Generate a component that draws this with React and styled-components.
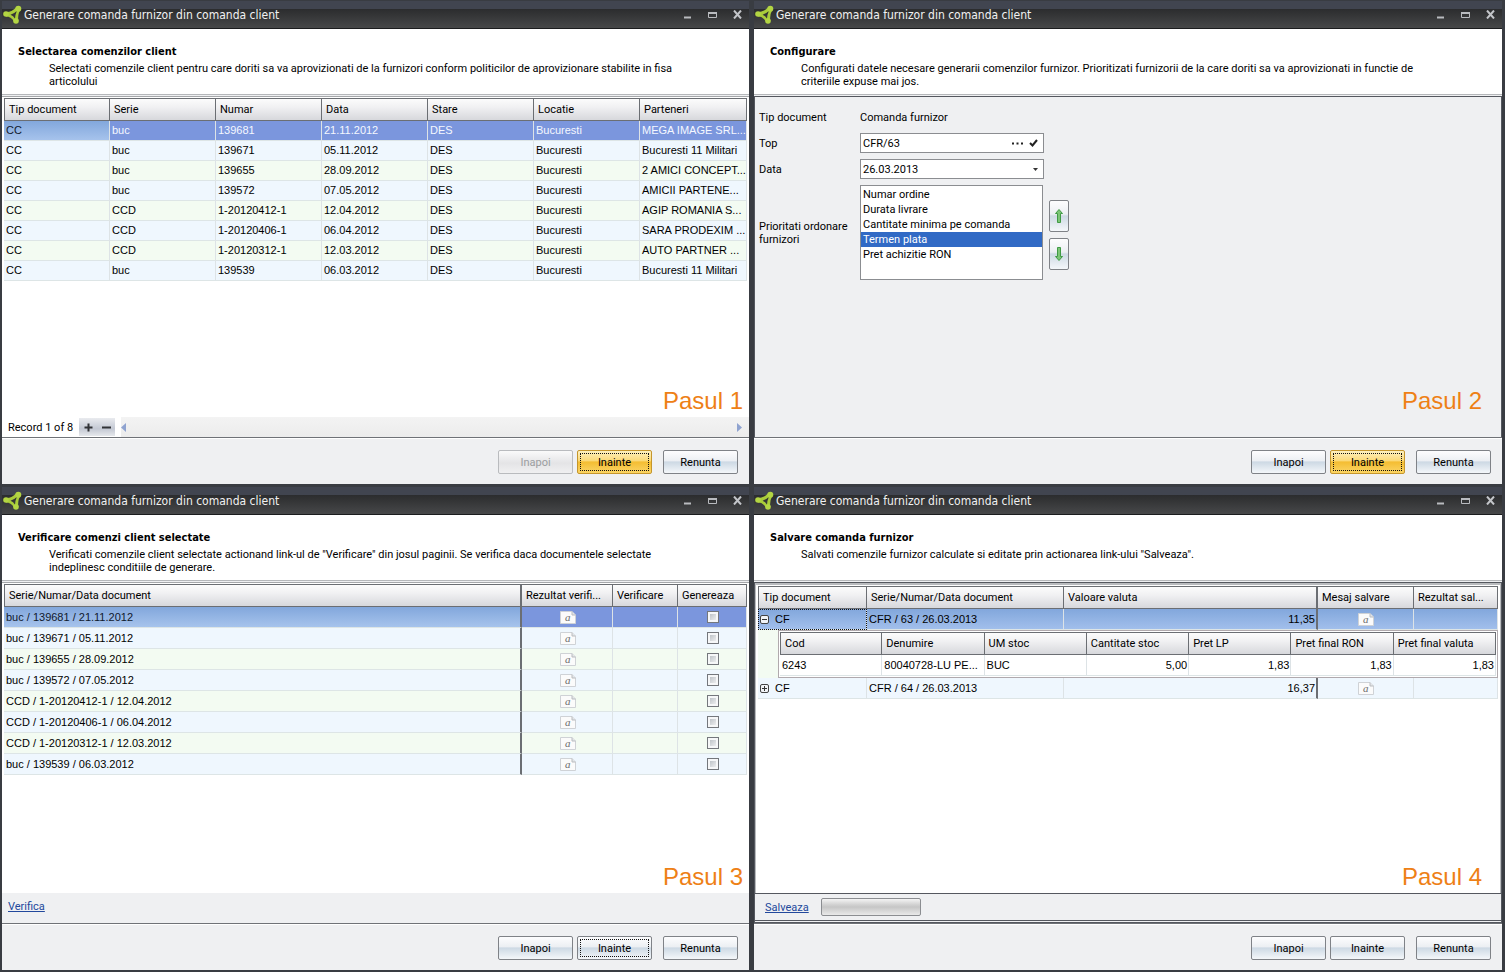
import styled, { createGlobalStyle, css } from "styled-components";

const orders = [
  ["CC", "buc", "139681", "21.11.2012", "DES", "Bucuresti", "MEGA IMAGE SRL..."],
  ["CC", "buc", "139671", "05.11.2012", "DES", "Bucuresti", "Bucuresti 11 Militari"],
  ["CC", "buc", "139655", "28.09.2012", "DES", "Bucuresti", "2 AMICI CONCEPT..."],
  ["CC", "buc", "139572", "07.05.2012", "DES", "Bucuresti", "AMICII PARTENE..."],
  ["CC", "CCD", "1-20120412-1", "12.04.2012", "DES", "Bucuresti", "AGIP ROMANIA S..."],
  ["CC", "CCD", "1-20120406-1", "06.04.2012", "DES", "Bucuresti", "SARA PRODEXIM ..."],
  ["CC", "CCD", "1-20120312-1", "12.03.2012", "DES", "Bucuresti", "AUTO PARTNER ..."],
  ["CC", "buc", "139539", "06.03.2012", "DES", "Bucuresti", "Bucuresti 11 Militari"],
];

const priorities = [
  "Numar ordine",
  "Durata livrare",
  "Cantitate minima pe comanda",
  "Termen plata",
  "Pret achizitie RON",
];

const Logo = () => (
  <svg width="20" height="20" viewBox="0 0 20 20" aria-hidden="true">
    <path
      fillRule="evenodd"
      d="M4 7Q9 7.500 14 2.500L18 5.500Q15.500 10 16.300 16L12 16.500Q9 11.500 4 11.500ZM8.500 9.800Q11.500 11 13 13.800Q13.200 9.500 14.800 6Q12 8.800 8.500 9.800Z"
      fill="#a9cc3a"
    />
    <circle cx="4" cy="9" r="2.800" fill="#b3d543" />
    <circle cx="16.300" cy="3.700" r="3" fill="#b3d543" />
    <circle cx="14" cy="16" r="2.800" fill="#b3d543" />
  </svg>
);

const DocIcon = () => (
  <svg width="16" height="13" viewBox="0 0 16 13" role="img" aria-label="mesaj">
    <path d="M.5.5H12L15.500 4V12.500H.5Z" fill="#fbfbfb" stroke="#cfd2d6" />
    <path d="M12 .5V4H15.500" fill="#e4e6e8" stroke="#b9bcc0" />
    <text x="5" y="10" fontFamily="Liberation Serif, serif" fontStyle="italic" fontSize="11" fill="#6b6b6b">a</text>
  </svg>
);

const Arrow = ({ down }) => (
  <svg width="10" height="16" viewBox="0 0 10 16" aria-hidden="true">
    <path
      d={down ? "M3.500 1.500H6.500V10.500H8.500L5 14.500 1.500 10.500H3.500Z" : "M3.500 14.500H6.500V5.500H8.500L5 1.500 1.500 5.500H3.500Z"}
      fill="#7cc576"
      stroke="#3f9a45"
    />
  </svg>
);

const Wizard = ({ title, text, step, back = true, accent, focused, stepInset, stepLift, children, footer }) => (
  <Window>
    <TitleBar>
      <Logo />
      <Caption>Generare comanda furnizor din comanda client</Caption>
      <WindowButton aria-label="Minimizare">
        <svg width="9" height="9" viewBox="0 0 9 9"><path d="M1 7.500H8" stroke="#b9bbbf" strokeWidth="2" /></svg>
      </WindowButton>
      <WindowButton aria-label="Maximizare">
        <svg width="9" height="9" viewBox="0 0 9 9">
          <path d="M.5 2.500H8.500V7.500H.5Z" fill="none" stroke="#b9bbbf" />
          <path d="M0 3H9" stroke="#b9bbbf" strokeWidth="2" />
        </svg>
      </WindowButton>
      <WindowButton aria-label="Inchidere">
        <svg width="9" height="9" viewBox="0 0 9 9"><path d="M1 .5 8 8.500M8 .5 1 8.500" stroke="#c3c5c9" strokeWidth="2" /></svg>
      </WindowButton>
    </TitleBar>
    <Intro>
      <IntroTitle>{title}</IntroTitle>
      <IntroText>{text}</IntroText>
    </Intro>
    {children}
    <Step $inset={stepInset} $lift={stepLift}>{step}</Step>
    {footer}
    <Footer>
      <Button disabled={!back}>Inapoi</Button>
      <Button $accent={accent} $focused={focused}>Inainte</Button>
      <Button $last>Renunta</Button>
    </Footer>
  </Window>
);

const SelectOrders = () => (
  <Wizard
    title="Selectarea comenzilor client"
    text="Selectati comenzile client pentru care doriti sa va aprovizionati de la furnizori conform politicilor de aprovizionare stabilite in fisa articolului"
    step="Pasul 1"
    back={false}
    accent
    focused
    footer={
      <Navigator>
        <span>Record 1 of 8</span>
        <NavButtons>
          <NavButton aria-label="Adauga">
            <svg width="9" height="9" viewBox="0 0 9 9"><path d="M4.500 .5V8.500M.5 4.500H8.500" stroke="#303236" strokeWidth="2" /></svg>
          </NavButton>
          <NavButton aria-label="Sterge">
            <svg width="9" height="9" viewBox="0 0 9 9"><path d="M0 4.500H9" stroke="#303236" strokeWidth="2" /></svg>
          </NavButton>
        </NavButtons>
        <ScrollTrack>
          <svg width="5" height="9" viewBox="0 0 5 9"><path d="M5 0V9L0 4.500Z" fill="#8fa3d0" /></svg>
          <svg width="5" height="9" viewBox="0 0 5 9"><path d="M0 0V9L5 4.500Z" fill="#8fa3d0" /></svg>
        </ScrollTrack>
      </Navigator>
    }
  >
    <GridArea>
      <Table>
        <colgroup>
          <Col $width={106} />
          <Col $width={106} />
          <Col $width={106} />
          <Col $width={106} />
          <Col $width={106} />
          <Col $width={106} />
          <col />
        </colgroup>
        <thead>
          <tr>
            {["Tip document", "Serie", "Numar", "Data", "Stare", "Locatie", "Parteneri"].map((h) => (
              <Th key={h}>{h}</Th>
            ))}
          </tr>
        </thead>
        <tbody>
          {orders.map((row, i) => (
            <Row key={row[2]} $selected={i === 0} $even={i % 2 === 0}>
              {row.map((value, j) => (
                <Td key={j} $focus={i === 0 && j === 0}>{value}</Td>
              ))}
            </Row>
          ))}
        </tbody>
      </Table>
    </GridArea>
  </Wizard>
);

const Configure = () => (
  <Wizard
    title="Configurare"
    text="Configurati datele necesare generarii comenzilor furnizor. Prioritizati furnizorii de la care doriti sa va aprovizionati in functie de criteriile expuse mai jos."
    step="Pasul 2"
    stepInset={20}
    stepLift={22}
    accent
    focused
  >
    <Form>
      <span>Tip document</span>
      <span>Comanda furnizor</span>
      <label htmlFor="top">Top</label>
      <Field>
        <TextInput id="top" defaultValue="CFR/63" />
        <FieldButton type="button" aria-label="Cauta">
          <svg width="11" height="3" viewBox="0 0 11 3"><path d="M0 1.500H2M4.500 1.500H6.500M9 1.500H11" stroke="#222" strokeWidth="2" /></svg>
        </FieldButton>
        <FieldButton type="button" aria-label="Confirma">
          <svg width="9" height="8" viewBox="0 0 9 8"><path d="M1 4 3.500 6.500 8 1" fill="none" stroke="#222" strokeWidth="2" /></svg>
        </FieldButton>
      </Field>
      <label htmlFor="data">Data</label>
      <Field>
        <DateSelect id="data">
          <option>26.03.2013</option>
        </DateSelect>
        <svg width="5" height="3" viewBox="0 0 5 3" aria-hidden="true"><path d="M0 0H5L2.500 3Z" fill="#333" /></svg>
      </Field>
      <label htmlFor="priority">Prioritati ordonare furnizori</label>
      <PriorityGroup>
        <ListBox id="priority" size="6" defaultValue="Termen plata">
          {priorities.map((p) => <option key={p}>{p}</option>)}
        </ListBox>
        <ArrowColumn>
          <ArrowButton type="button" aria-label="Sus"><Arrow /></ArrowButton>
          <ArrowButton type="button" aria-label="Jos"><Arrow down /></ArrowButton>
        </ArrowColumn>
      </PriorityGroup>
    </Form>
  </Wizard>
);

const CheckOrders = () => (
  <Wizard
    title="Verificare comenzi client selectate"
    text={'Verificati comenzile client selectate actionand link-ul de "Verificare" din josul paginii. Se verifica daca documentele selectate indeplinesc conditiile de generare.'}
    step="Pasul 3"
    focused
    footer={
      <LinkBar>
        <ActionLink href="#verifica">Verifica</ActionLink>
      </LinkBar>
    }
  >
    <GridArea>
      <Table $rowHeight={21}>
        <colgroup>
          <col />
          <Col $width={91} />
          <Col $width={65} />
          <Col $width={69} />
        </colgroup>
        <thead>
          <tr>
            <Th $fixed>Serie/Numar/Data document</Th>
            <Th>Rezultat verifi...</Th>
            <Th>Verificare</Th>
            <Th>Genereaza</Th>
          </tr>
        </thead>
        <tbody>
          {orders.map((row, i) => (
            <Row key={row[2]} $selected={i === 0} $even={i % 2 === 0}>
              <Td $fixed $focus={i === 0}>{`${row[1]} / ${row[2]} / ${row[3]}`}</Td>
              <Td $align="center"><DocIcon /></Td>
              <Td />
              <Td $align="center"><CheckBox aria-label={`Genereaza ${row[2]}`} /></Td>
            </Row>
          ))}
        </tbody>
      </Table>
    </GridArea>
  </Wizard>
);

const SaveOrders = () => (
  <Wizard
    title="Salvare comanda furnizor"
    text={'Salvati comenzile furnizor calculate si editate prin actionarea link-ului "Salveaza".'}
    step="Pasul 4"
    stepInset={20}
    footer={
      <LinkBar $framed>
        <ActionLink href="#salveaza">Salveaza</ActionLink>
        <Progress role="progressbar" aria-label="Salvare" aria-valuenow={0} />
      </LinkBar>
    }
  >
    <GridArea $framed>
      <Table $rowHeight={21}>
        <colgroup>
          <Col $width={109} />
          <Col $width={197} />
          <col />
          <Col $width={96} />
          <Col $width={84} />
        </colgroup>
        <thead>
          <tr>
            <Th>Tip document</Th>
            <Th>Serie/Numar/Data document</Th>
            <Th $fixed>Valoare valuta</Th>
            <Th>Mesaj salvare</Th>
            <Th>Rezultat sal...</Th>
          </tr>
        </thead>
        <tbody>
          <Row $highlight>
            <Td $dotted>
              <TreeCell>
                <Toggle aria-label="Restrange" aria-expanded="true">
                  <svg width="9" height="9" viewBox="0 0 9 9"><rect x=".5" y=".5" width="8" height="8" rx="1.500" fill="#f2f4f7" stroke="#444" /><path d="M2 4.500H7" stroke="#333" /></svg>
                </Toggle>
                CF
              </TreeCell>
            </Td>
            <Td>CFR / 63 / 26.03.2013</Td>
            <Td $fixed $align="right">11,35</Td>
            <Td $align="center"><DocIcon /></Td>
            <Td />
          </Row>
          <tr>
            <DetailCell colSpan="5">
              <Detail>
                <Table $rowHeight={21}>
                  <thead>
                    <tr>
                      {["Cod", "Denumire", "UM stoc", "Cantitate stoc", "Pret LP", "Pret final RON", "Pret final valuta"].map((h) => (
                        <Th key={h}>{h}</Th>
                      ))}
                    </tr>
                  </thead>
                  <tbody>
                    <Row $plain>
                      <Td>6243</Td>
                      <Td>80040728-LU PE...</Td>
                      <Td>BUC</Td>
                      <Td $align="right">5,00</Td>
                      <Td $align="right">1,83</Td>
                      <Td $align="right">1,83</Td>
                      <Td $align="right">1,83</Td>
                    </Row>
                  </tbody>
                </Table>
              </Detail>
            </DetailCell>
          </tr>
          <Row>
            <Td>
              <TreeCell>
                <Toggle aria-label="Extinde" aria-expanded="false">
                  <svg width="9" height="9" viewBox="0 0 9 9"><rect x=".5" y=".5" width="8" height="8" rx="1.500" fill="#f2f4f7" stroke="#444" /><path d="M2 4.500H7M4.500 2V7" stroke="#333" /></svg>
                </Toggle>
                CF
              </TreeCell>
            </Td>
            <Td>CFR / 64 / 26.03.2013</Td>
            <Td $fixed $align="right">16,37</Td>
            <Td $align="center"><DocIcon /></Td>
            <Td />
          </Row>
        </tbody>
      </Table>
    </GridArea>
  </Wizard>
);

const App = () => (
  <>
    <GlobalStyle />
    <Desktop>
      <SelectOrders />
      <Configure />
      <CheckOrders />
      <SaveOrders />
    </Desktop>
  </>
);

const captionFont = `"DejaVu Sans Condensed", "DejaVu Sans", sans-serif`;
const uiFont = `Roboto, Tahoma, sans-serif`;
const gridFont = `"Liberation Sans", Arial, sans-serif`;

const GlobalStyle = createGlobalStyle`
  * {
    box-sizing: border-box;
  }
  body {
    margin: 0;
    background: #26282c;
    color: #000;
    font: 11px/13px ${uiFont};
  }
  button, input, select {
    font: inherit;
    color: inherit;
    margin: 0;
  }
  svg {
    display: block;
    flex: none;
  }
`;

const Desktop = styled.main`
  display: grid;
  grid-template-columns: 752fr 753fr;
  grid-auto-rows: 1fr;
  min-height: 100vh;
`;

const Window = styled.section`
  display: flex;
  flex-direction: column;
  min-width: 0;
  background: #eff0f2;
  border: solid #393c42;
  border-width: 1px 3px 2px 2px;
`;

const TitleBar = styled.header`
  display: flex;
  align-items: center;
  height: 28px;
  padding-right: 4px;
  background: linear-gradient(#414550 0 8px, #2b2c2e 8px, #474849 27px);
  border-bottom: 1px solid #1b1c1e;
`;

const Caption = styled.span`
  flex: 1;
  margin-left: 2px;
  color: #f1f1f1;
  font: 12px/20px ${captionFont};
`;

const WindowButton = styled.button`
  display: flex;
  justify-content: center;
  width: 25px;
  padding: 0;
  border: 0;
  background: none;
  &:last-child {
    width: 16px;
    margin-left: 4px;
  }
`;

const Intro = styled.div`
  height: 66px;
  padding: 16px 60px 0 16px;
  background: #fff;
  border-bottom: 1px solid #b5b7ba;
`;

const IntroTitle = styled.h2`
  margin: 0;
  font: bold 11px/13px ${captionFont};
`;

const IntroText = styled.p`
  margin: 4px 0 0 31px;
`;

const GridArea = styled.div`
  flex: 1;
  margin-top: 1px;
  padding: 1px 2px;
  background: #fff;
  border: solid #a5a7aa;
  border-width: 1px 0 0;
  ${({ $framed }) => $framed && css`
    padding: 3px 3px 0;
    border: 1px solid #55585f;
    border-bottom: 0;
    box-shadow: inset 1px 2px 0 #b9bbbe, inset -1px 0 0 #b9bbbe;
  `}
`;

const Table = styled.table`
  width: 100%;
  table-layout: fixed;
  border-collapse: separate;
  border-spacing: 0;
  font-family: ${gridFont};
  td {
    height: ${({ $rowHeight = 20 }) => $rowHeight}px;
  }
`;

const Col = styled.col`
  width: ${({ $width }) => $width}px;
`;

const Th = styled.th`
  height: 23px;
  padding: 0 4px;
  overflow: hidden;
  white-space: nowrap;
  text-align: left;
  font-family: ${uiFont};
  font-weight: 400;
  background: linear-gradient(#fcfcfc, #f0f0f2 40%, #d7d8dc);
  border: solid #6b6e73;
  border-width: 1px ${({ $fixed }) => ($fixed ? 2 : 1)}px 1px 0;
  &:first-child {
    border-left-width: 1px;
  }
`;

const Td = styled.td`
  padding: 0 1px 0 2px;
  overflow: hidden;
  white-space: nowrap;
  text-align: ${({ $align = "left" }) => $align};
  border-right: 1px solid #dde3e6;
  border-bottom: 1px solid #dde5e6;
  ${({ $fixed }) => $fixed && css`
    border-right: 2px solid #6b6e73;
  `}
  ${({ $focus }) => $focus && css`
    color: #10182c;
    background: linear-gradient(#82a7dc, #a6c3ec);
  `}
  ${({ $dotted }) => $dotted && css`
    outline: 1px dotted #111;
    outline-offset: -1px;
  `}
  svg {
    margin: 0 auto;
  }
`;

const Row = styled.tr`
  background: ${({ $even }) => ($even ? "#f3fbf2" : "#eff7fe")};
  ${({ $selected }) => $selected && css`
    background: #7b96dd;
    color: #f5f8ff;
  `}
  ${({ $highlight }) => $highlight && css`
    background: linear-gradient(#82a7dc, #a3c0ec);
  `}
  ${({ $plain }) => $plain && css`
    background: #fff;
  `}
`;

const DetailCell = styled.td`
  padding: 0 0 0 20px;
  background: #f3fbf2;
`;

const Detail = styled.div`
  padding: 1px;
  background: #fff;
  border: 1px solid #b0a9ad;
`;

const TreeCell = styled.div`
  display: flex;
  align-items: center;
  gap: 6px;
`;

const Toggle = styled.button`
  padding: 0;
  border: 0;
  background: none;
`;

const CheckBox = styled.input.attrs({ type: "checkbox" })`
  appearance: none;
  display: block;
  width: 12px;
  height: 12px;
  margin: 0 auto;
  border: 1px solid #74777c;
  background: linear-gradient(135deg, #b0b6bc, #fbfbfb);
  box-shadow: inset 0 0 0 2px #f6f7f8;
`;

const Form = styled.form`
  flex: 1;
  display: grid;
  grid-template-columns: 101px 1fr;
  grid-template-rows: 26px 26px 26px 101px;
  align-items: center;
  align-content: start;
  margin-top: 1px;
  padding: 7px 4px 0;
  border: 1px solid #55585f;
  border-bottom: 0;
`;

const Field = styled.div`
  display: flex;
  align-items: center;
  gap: 6px;
  width: 184px;
  height: 20px;
  padding-right: 5px;
  background: #fff;
  border: 1px solid #8b8d91;
`;

const TextInput = styled.input`
  flex: 1;
  min-width: 0;
  padding: 0 2px;
  border: 0;
  background: none;
`;

const DateSelect = styled.select`
  flex: 1;
  padding: 0 2px;
  border: 0;
  background: none;
  appearance: none;
`;

const FieldButton = styled.button`
  padding: 0;
  border: 0;
  background: none;
`;

const PriorityGroup = styled.div`
  display: flex;
  align-items: center;
  gap: 6px;
`;

const ListBox = styled.select`
  width: 183px;
  height: 95px;
  padding: 1px 0;
  overflow: hidden;
  background: #fff;
  border: 1px solid #8b8d91;
  border-radius: 0;
  option {
    height: 15px;
    padding: 1px 2px;
  }
  option:checked {
    color: #fff;
    background: linear-gradient(#316ac5, #316ac5);
  }
`;

const ArrowColumn = styled.div`
  display: flex;
  flex-direction: column;
  gap: 6px;
  padding-top: 4px;
`;

const buttonFace = css`
  border: 1px solid #7f8287;
  border-radius: 2px;
  background: linear-gradient(#fdfdfe, #eceff3 44%, #cdd9e4 50%, #f4f7fa);
`;

const ArrowButton = styled.button`
  display: grid;
  place-items: center;
  width: 20px;
  height: 32px;
  padding: 0;
  ${buttonFace}
`;

const Step = styled.strong`
  align-self: flex-end;
  margin: ${({ $inset = 6, $lift = 2 }) => `${-28 - $lift}px ${$inset}px ${$lift}px`};
  color: #ee8016;
  font: 24px/28px "Liberation Sans", Arial, sans-serif;
`;

const Navigator = styled.div`
  display: flex;
  align-items: center;
  gap: 6px;
  height: 20px;
  padding-left: 6px;
  background: #fff;
`;

const NavButtons = styled.div`
  display: flex;
  height: 18px;
  background: linear-gradient(#e9ebef, #c3c8d3 60%, #e6e8ec);
`;

const NavButton = styled.button`
  display: grid;
  place-items: center;
  width: 18px;
  padding: 0;
  border: 0;
  background: none;
`;

const ScrollTrack = styled.div`
  flex: 1;
  display: flex;
  align-items: center;
  justify-content: space-between;
  align-self: stretch;
  padding-right: 7px;
  background: linear-gradient(#f3f3f3, #ececec);
`;

const LinkBar = styled.div`
  display: flex;
  align-items: center;
  gap: 12px;
  height: 30px;
  padding: 0 6px 4px;
  background: #eff0f2;
  ${({ $framed }) => $framed && css`
    padding: 0 10px;
    border: 1px solid #55585f;
    border-bottom: 3px double #55585f;
  `}
`;

const ActionLink = styled.a`
  color: #22489c;
`;

const Progress = styled.div`
  width: 100px;
  height: 18px;
  border: 1px solid #8b8d91;
  border-radius: 2px;
  background: linear-gradient(#f4f4f4, #d2d2d2 35%, #c6c6c6 50%, #e9e9e9);
`;

const Footer = styled.footer`
  display: flex;
  align-items: center;
  justify-content: flex-end;
  gap: 4px;
  height: 47px;
  padding: 2px 11px 0 0;
  border-top: 1px solid #6f7277;
  box-shadow: inset 0 1px 0 #fff;
`;

const Button = styled.button`
  width: 75px;
  height: 24px;
  padding: 0;
  margin-left: ${({ $last }) => ($last ? 7 : 0)}px;
  ${buttonFace}
  ${({ $accent }) => $accent && css`
    border-color: #c5962c;
    background: linear-gradient(#fdf0c0, #fbd978 44%, #f4bd32 50%, #fbd566);
  `}
  ${({ $focused }) => $focused && css`
    outline: 1px dotted #111;
    outline-offset: -4px;
  `}
  &:disabled {
    color: #9b9da0;
    border-color: #b9bbbe;
    background: linear-gradient(#fafafa, #e4e4e6 55%, #f0f0f1);
  }
`;

export default App;
